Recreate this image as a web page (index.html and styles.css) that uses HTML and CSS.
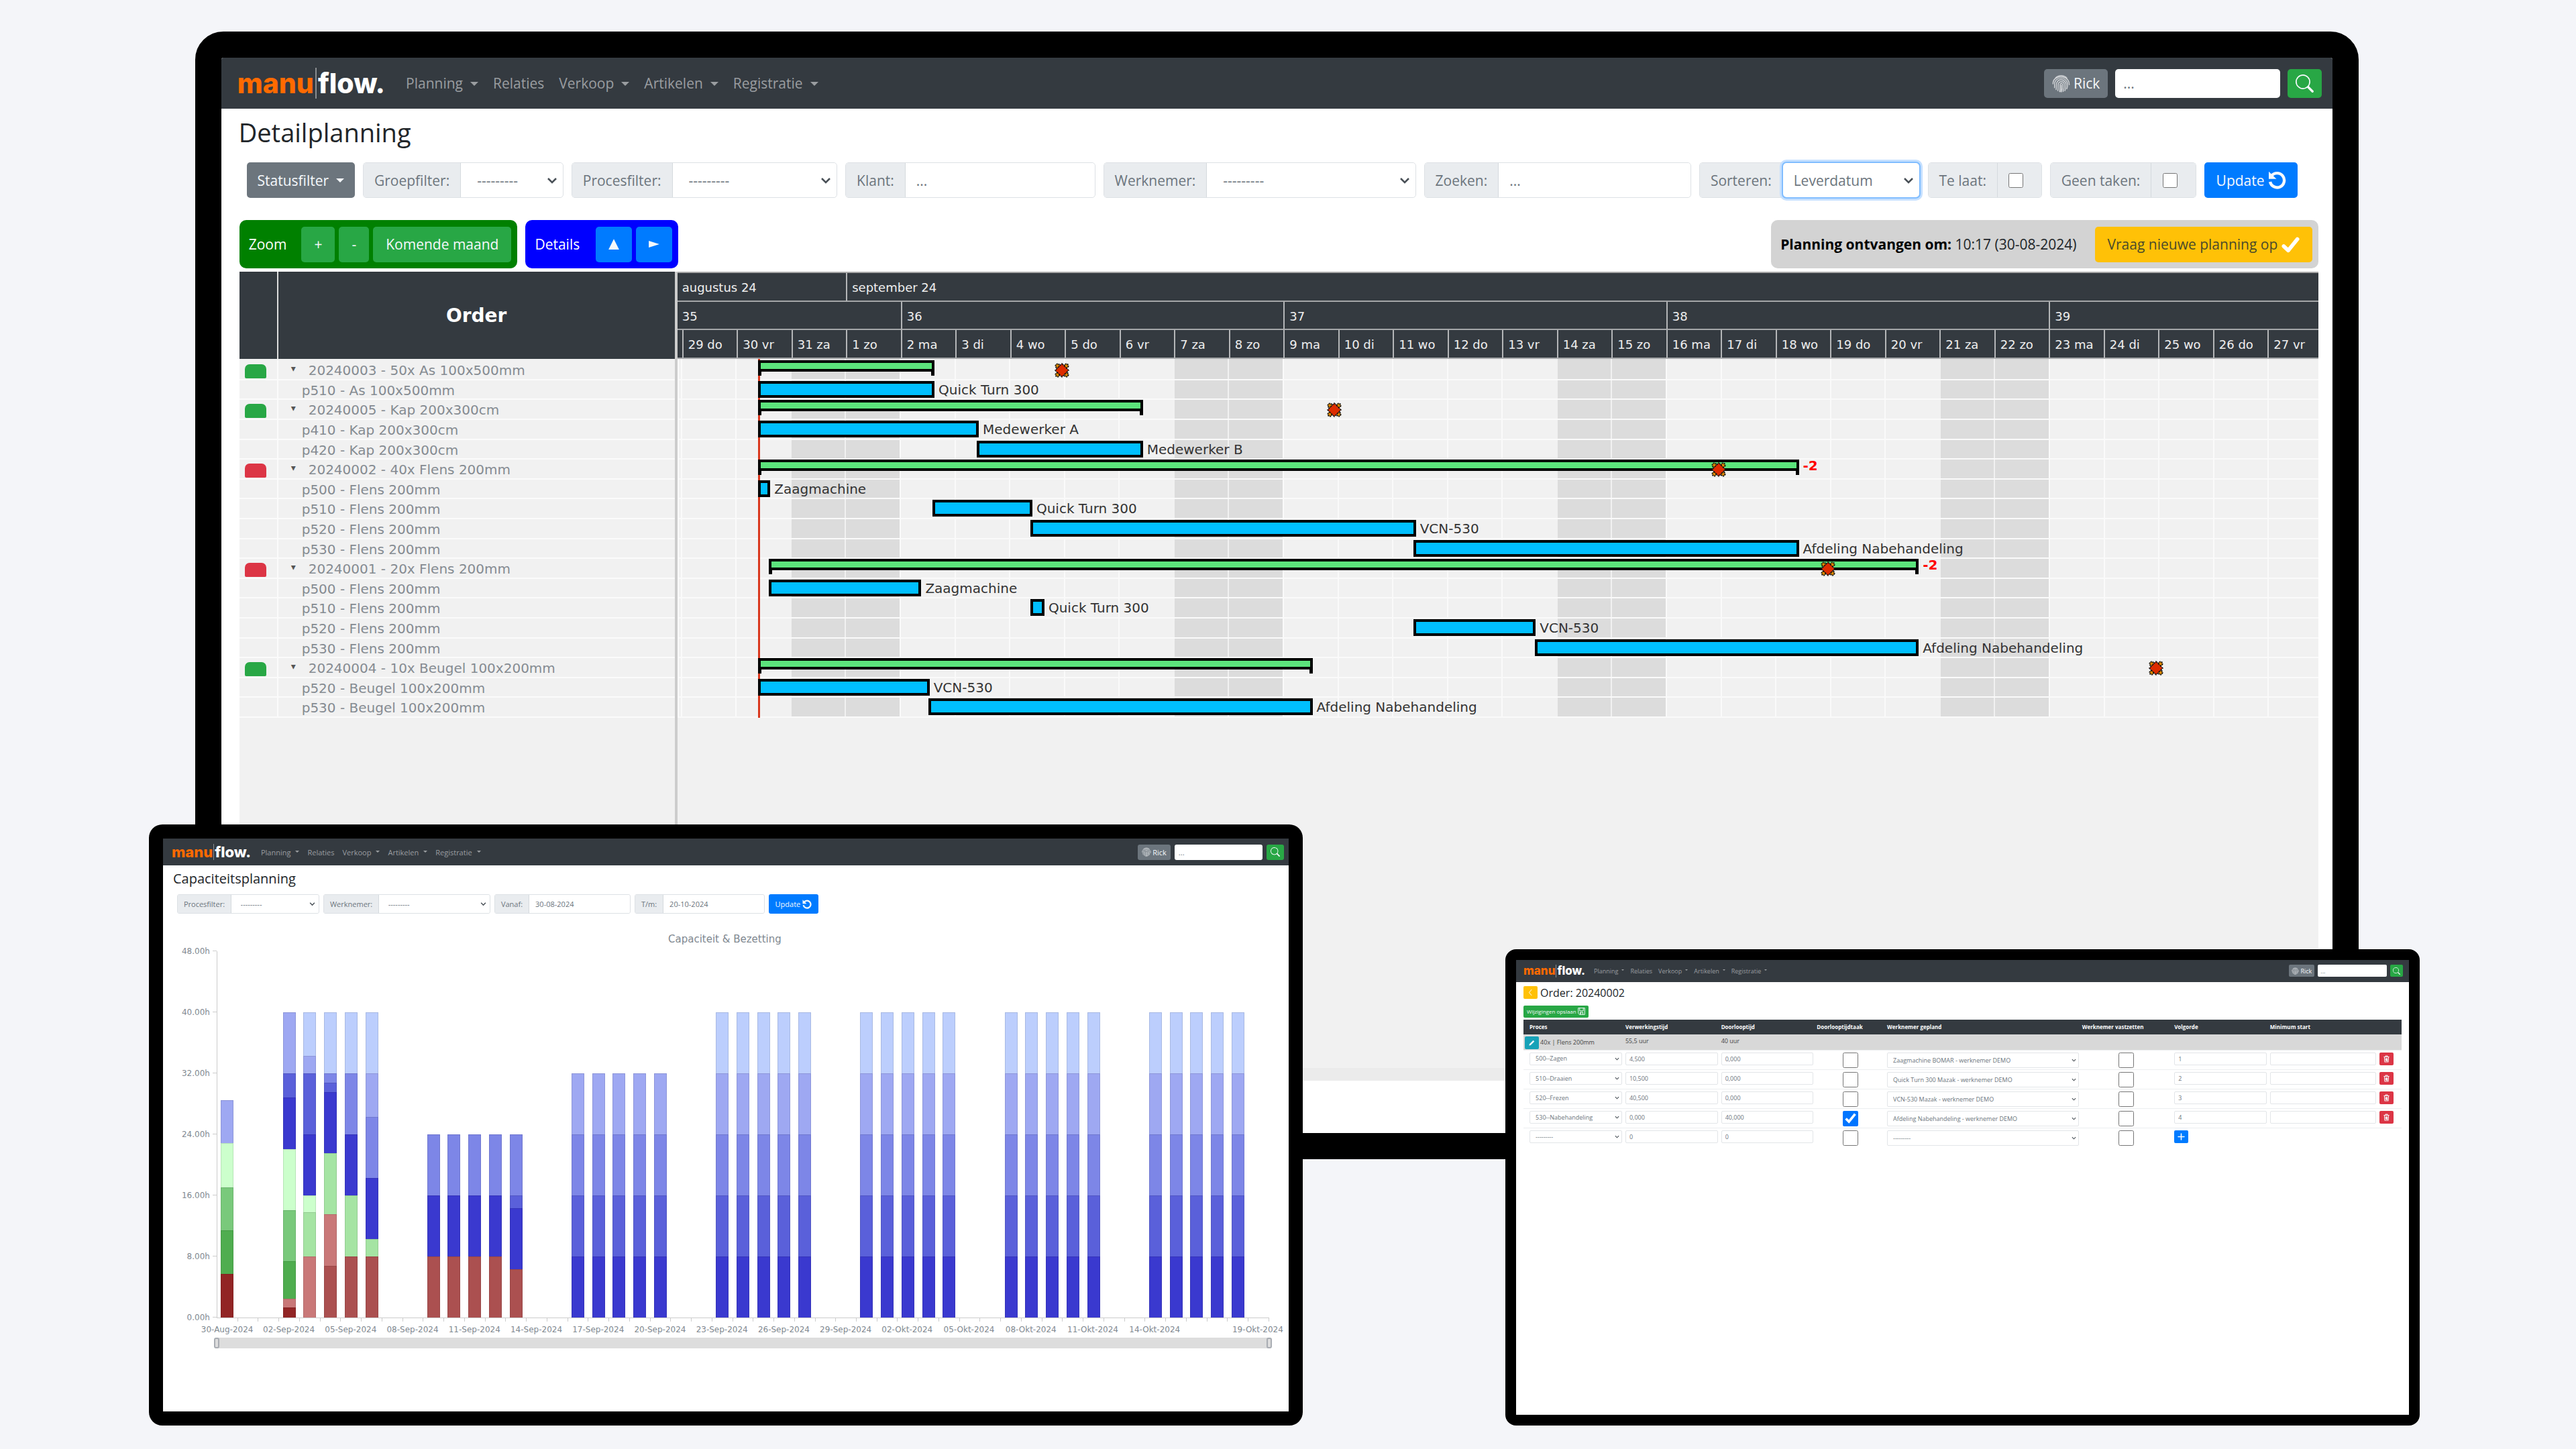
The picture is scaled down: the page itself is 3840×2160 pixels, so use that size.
FILE: index.html
```html
<!DOCTYPE html>
<html lang="nl">
<head>
<meta charset="utf-8">
<title>Manuflow</title>
<meta name="viewport" content="width=device-width, initial-scale=1">
<link rel="stylesheet" href="styles.css">
</head>
<body>
<svg class="sprite" aria-hidden="true">
  <symbol id="i-finger" viewBox="0 0 24 24"><g fill="none" stroke="currentColor" stroke-width="1.3" stroke-linecap="round"><path d="M4.5 4.6A10.6 10.6 0 0 1 19.500 4.600"/><path d="M1.200 12.500C1.200 9 3 5.500 6.500 4.200C11 2 18 3 21 7.500C22.500 9.500 22.800 11 22.800 13.500"/><path d="M3.200 17.500C3.600 15 3 13 3.600 10.600C5 6 9.500 5 12 5C16.500 5 20.500 8.500 20.600 13C20.700 15 20.300 17 19.600 19"/><path d="M5.300 20C6 17 5.400 14 6 11.500C7 8.500 9.500 7.200 12 7.200C15.500 7.200 18.300 10 18.400 13C18.500 16 18 19 17 21.500"/><path d="M7.600 21.500C8.300 18 7.800 15 8.300 12.500C8.800 10.500 10.300 9.500 12 9.500C14.300 9.500 16 11 16.100 13.200C16.200 16.500 15.600 20 14.700 22.500"/><path d="M10 22.800C10.700 19 10.300 16 10.600 13.500C10.800 12.300 11.300 11.800 12 11.800C13.200 11.800 13.800 12.500 13.800 13.500C14 17 13.500 20 12.500 23"/><path d="M12.100 14.200C12.300 17 12 20 11.400 22.800"/></g></symbol>
  <symbol id="i-search" viewBox="0 0 16 16"><path fill="currentColor" d="M11.742 10.344a6.5 6.5 0 1 0-1.397 1.398l.04.050 3.850 3.850a1 1 0 0 0 1.415-1.414l-3.850-3.850zM12 6.500a5.500 5.500 0 1 1-11 0 5.500 5.500 0 0 1 11 0z"/></symbol>
  <symbol id="i-reset" viewBox="0 0 16 16"><path d="M3 4.300A6.300 6.300 0 1 1 1.800 9.500" fill="none" stroke="currentColor" stroke-width="2.600"/><path d="M.6.400V7H7.400z" fill="currentColor"/></symbol>
  <symbol id="i-check" viewBox="0 0 16 16"><path d="M2 9.500L6 13.200L14 3.300" fill="none" stroke="currentColor" stroke-width="3.400" stroke-linecap="round" stroke-linejoin="round"/></symbol>
  <symbol id="i-back" viewBox="0 0 16 16"><path d="M10.500 1.500L5 8L10.500 14.500" fill="none" stroke="currentColor" stroke-width="1.400"/></symbol>
  <symbol id="i-save" viewBox="0 0 16 16"><path d="M1 1H15V15H3.500L1 12.500zM4 1V7H12V1M5 15V10H11V15M7 11V14" fill="none" stroke="currentColor" stroke-width="1.400"/></symbol>
  <symbol id="i-pen" viewBox="0 0 16 16"><path d="M2 14L3 10.500L11 2.500L13.500 5L5.500 13z" fill="currentColor"/></symbol>
  <symbol id="i-trash" viewBox="0 0 16 16"><path d="M2 3.500H14M6 3V1.500H10V3M3.500 4.500L4.300 14.500H11.700L12.500 4.500M6.200 6V13M8 6V13M9.800 6V13" fill="none" stroke="currentColor" stroke-width="1.500"/></symbol>
  <symbol id="i-plus" viewBox="0 0 16 16"><path d="M8 1.500V14.500M1.500 8H14.500" stroke="currentColor" stroke-width="2.400" stroke-linecap="round"/></symbol>
  <symbol id="i-milestone" viewBox="0 0 22 22"><g fill="#e08a00" stroke="#111" stroke-width="2" stroke-dasharray="2 1"><circle cx="4.500" cy="4.500" r="3"/><circle cx="17.500" cy="4.500" r="3"/><circle cx="4.500" cy="17.500" r="3"/><circle cx="17.500" cy="17.500" r="3"/></g><path d="M11 1L21 11L11 21L1 11z" fill="#dd2c00" stroke="#111" stroke-width="1.500" stroke-dasharray="3 1"/></symbol>
  <symbol id="i-up" viewBox="0 0 16 16"><path d="M8 1L15 15H1z" fill="currentColor"/></symbol>
  <symbol id="i-right" viewBox="0 0 16 16"><path d="M1 3.500L15 8L1 12.500z" fill="currentColor"/></symbol>
</svg>

<main class="stage">

<section class="device device-main">
  <nav class="nav">
    <a class="brand" href="#"><span class="brand-a">manu</span><span class="brand-b">flow.</span></a>
    <div class="links">
      <a class="drop" href="#">Planning</a><a href="#">Relaties</a><a class="drop" href="#">Verkoop</a><a class="drop" href="#">Artikelen</a><a class="drop" href="#">Registratie</a>
    </div>
    <form class="search">
      <button type="button" class="btn user"><svg class="icon"><use href="#i-finger"/></svg>Rick</button>
      <input type="text" aria-label="Zoeken" placeholder="...">
      <button type="button" class="btn green" aria-label="Zoek"><svg class="icon"><use href="#i-search"/></svg></button>
    </form>
  </nav>
  <h1>Detailplanning</h1>
  <form class="filters">
    <button type="button" class="btn grey drop f-status">Statusfilter</button>
    <div class="group f-groep"><label for="groep">Groepfilter:</label><select id="groep"><option>---------</option></select></div>
    <div class="group f-proces"><label for="proces">Procesfilter:</label><select id="proces"><option>---------</option></select></div>
    <div class="group f-klant"><label for="klant">Klant:</label><input id="klant" type="text" placeholder="..."></div>
    <div class="group f-werk"><label for="werk">Werknemer:</label><select id="werk"><option>---------</option></select></div>
    <div class="group f-zoek"><label for="zoek">Zoeken:</label><input id="zoek" type="text" placeholder="..."></div>
    <div class="group f-sort"><label for="sort">Sorteren:</label><select id="sort" class="focused"><option>Leverdatum</option></select></div>
    <div class="group f-laat"><label for="laat">Te laat:</label><span class="tick"><input id="laat" type="checkbox"></span></div>
    <div class="group f-geen"><label for="geen">Geen taken:</label><span class="tick"><input id="geen" type="checkbox"></span></div>
    <button type="button" class="btn blue f-update">Update<svg class="icon"><use href="#i-reset"/></svg></button>
  </form>
  <div class="tools">
    <div class="box box-zoom"><span>Zoom</span><div class="btns"><button class="btn green">+</button><button class="btn green">-</button><button class="btn green">Komende maand</button></div></div>
    <div class="box box-details"><span>Details</span><div class="btns"><button class="btn blue" aria-label="Inklappen"><svg class="icon"><use href="#i-up"/></svg></button><button class="btn blue" aria-label="Uitklappen"><svg class="icon"><use href="#i-right"/></svg></button></div></div>
    <div class="box box-status"><span><b>Planning ontvangen om:</b> 10:17 (30-08-2024)</span><button class="btn yellow">Vraag nieuwe planning op<svg class="icon"><use href="#i-check"/></svg></button></div>
  </div>
  <div class="gantt">
    <div class="tree">
      <div class="tree-head"><span></span><strong>Order</strong></div>
      <div class="tree-rows" id="tree"></div>
    </div>
    <div class="time">
      <div class="time-head" id="scale"></div>
      <div class="time-rows" id="bars"></div>
    </div>
  </div>
</section>

<section class="device device-capacity">
  <nav class="nav">
    <a class="brand" href="#"><span class="brand-a">manu</span><span class="brand-b">flow.</span></a>
    <div class="links">
      <a class="drop" href="#">Planning</a><a href="#">Relaties</a><a class="drop" href="#">Verkoop</a><a class="drop" href="#">Artikelen</a><a class="drop" href="#">Registratie</a>
    </div>
    <form class="search">
      <button type="button" class="btn user"><svg class="icon"><use href="#i-finger"/></svg>Rick</button>
      <input type="text" aria-label="Zoeken" placeholder="...">
      <button type="button" class="btn green" aria-label="Zoek"><svg class="icon"><use href="#i-search"/></svg></button>
    </form>
  </nav>
  <h1>Capaciteitsplanning</h1>
  <form class="filters">
    <div class="group c-proces"><label for="c-proces">Procesfilter:</label><select id="c-proces"><option>---------</option></select></div>
    <div class="group c-werk"><label for="c-werk">Werknemer:</label><select id="c-werk"><option>---------</option></select></div>
    <div class="group c-van"><label for="c-van">Vanaf:</label><input id="c-van" type="text" value="30-08-2024"></div>
    <div class="group c-tot"><label for="c-tot">T/m:</label><input id="c-tot" type="text" value="20-10-2024"></div>
    <button type="button" class="btn blue">Update<svg class="icon"><use href="#i-reset"/></svg></button>
  </form>
  <h2>Capaciteit &amp; Bezetting</h2>
  <div class="chart">
    <ol class="y-axis"><li>48.00h</li><li>40.00h</li><li>32.00h</li><li>24.00h</li><li>16.00h</li><li>8.00h</li><li>0.00h</li></ol>
    <div class="plot" id="plot"></div>
    <div class="range"><i></i><i></i></div>
  </div>
</section>

<section class="device device-order">
  <nav class="nav">
    <a class="brand" href="#"><span class="brand-a">manu</span><span class="brand-b">flow.</span></a>
    <div class="links">
      <a class="drop" href="#">Planning</a><a href="#">Relaties</a><a class="drop" href="#">Verkoop</a><a class="drop" href="#">Artikelen</a><a class="drop" href="#">Registratie</a>
    </div>
    <form class="search">
      <button type="button" class="btn user"><svg class="icon"><use href="#i-finger"/></svg>Rick</button>
      <input type="text" aria-label="Zoeken" placeholder="...">
      <button type="button" class="btn green" aria-label="Zoek"><svg class="icon"><use href="#i-search"/></svg></button>
    </form>
  </nav>
  <div class="order-title"><button class="btn yellow square back" aria-label="Terug"><svg class="icon"><use href="#i-back"/></svg></button><h1>Order: 20240002</h1></div>
  <button class="btn green save">Wijzigingen opslaan<svg class="icon"><use href="#i-save"/></svg></button>
  <table class="processes">
    <colgroup><col class="k1"><col class="k2"><col class="k2"><col class="k4"><col class="k5"><col class="k6"><col class="k2"><col class="k8"><col></colgroup>
    <thead><tr><th>Proces</th><th>Verwerkingstijd</th><th>Doorlooptijd</th><th>Doorlooptijdtaak</th><th>Werknemer gepland</th><th>Werknemer vastzetten</th><th>Volgorde</th><th>Minimum start</th><th></th></tr></thead>
    <tbody>
      <tr class="part"><td><button class="btn teal square" aria-label="Bewerken"><svg class="icon"><use href="#i-pen"/></svg></button>40x | Flens 200mm</td><td>55,5 uur</td><td>40 uur</td><td></td><td></td><td></td><td></td><td></td><td></td></tr>
      <tr><td><select aria-label="Proces"><option>500--Zagen</option></select></td><td><input type="text" aria-label="Verwerkingstijd" value="4,500"></td><td><input type="text" aria-label="Doorlooptijd" value="0,000"></td><td class="mid"><input type="checkbox" aria-label="Doorlooptijdtaak"></td><td><select class="tall" aria-label="Werknemer gepland"><option>Zaagmachine BOMAR - werknemer DEMO</option></select></td><td class="mid"><input type="checkbox" aria-label="Werknemer vastzetten"></td><td><input type="text" aria-label="Volgorde" value="1"></td><td><input class="tall" type="text" aria-label="Minimum start"></td><td><button class="btn red square" aria-label="Verwijderen"><svg class="icon"><use href="#i-trash"/></svg></button></td></tr>
      <tr><td><select aria-label="Proces"><option>510--Draaien</option></select></td><td><input type="text" aria-label="Verwerkingstijd" value="10,500"></td><td><input type="text" aria-label="Doorlooptijd" value="0,000"></td><td class="mid"><input type="checkbox" aria-label="Doorlooptijdtaak"></td><td><select class="tall" aria-label="Werknemer gepland"><option>Quick Turn 300 Mazak - werknemer DEMO</option></select></td><td class="mid"><input type="checkbox" aria-label="Werknemer vastzetten"></td><td><input type="text" aria-label="Volgorde" value="2"></td><td><input class="tall" type="text" aria-label="Minimum start"></td><td><button class="btn red square" aria-label="Verwijderen"><svg class="icon"><use href="#i-trash"/></svg></button></td></tr>
      <tr><td><select aria-label="Proces"><option>520--Frezen</option></select></td><td><input type="text" aria-label="Verwerkingstijd" value="40,500"></td><td><input type="text" aria-label="Doorlooptijd" value="0,000"></td><td class="mid"><input type="checkbox" aria-label="Doorlooptijdtaak"></td><td><select class="tall" aria-label="Werknemer gepland"><option>VCN-530 Mazak - werknemer DEMO</option></select></td><td class="mid"><input type="checkbox" aria-label="Werknemer vastzetten"></td><td><input type="text" aria-label="Volgorde" value="3"></td><td><input class="tall" type="text" aria-label="Minimum start"></td><td><button class="btn red square" aria-label="Verwijderen"><svg class="icon"><use href="#i-trash"/></svg></button></td></tr>
      <tr><td><select aria-label="Proces"><option>530--Nabehandeling</option></select></td><td><input type="text" aria-label="Verwerkingstijd" value="0,000"></td><td><input type="text" aria-label="Doorlooptijd" value="40,000"></td><td class="mid"><input type="checkbox" aria-label="Doorlooptijdtaak" checked></td><td><select class="tall" aria-label="Werknemer gepland"><option>Afdeling Nabehandeling - werknemer DEMO</option></select></td><td class="mid"><input type="checkbox" aria-label="Werknemer vastzetten"></td><td><input type="text" aria-label="Volgorde" value="4"></td><td><input class="tall" type="text" aria-label="Minimum start"></td><td><button class="btn red square" aria-label="Verwijderen"><svg class="icon"><use href="#i-trash"/></svg></button></td></tr>
      <tr><td><select aria-label="Proces"><option>---------</option></select></td><td><input type="text" aria-label="Verwerkingstijd" value="0"></td><td><input type="text" aria-label="Doorlooptijd" value="0"></td><td class="mid"><input type="checkbox" aria-label="Doorlooptijdtaak"></td><td><select class="tall" aria-label="Werknemer gepland"><option>---------</option></select></td><td class="mid"><input type="checkbox" aria-label="Werknemer vastzetten"></td><td><button class="btn blue square" aria-label="Toevoegen"><svg class="icon"><use href="#i-plus"/></svg></button></td><td></td><td></td></tr>
    </tbody>
  </table>
</section>

</main>
<script src="script.js"></script>
</body>
</html>
```
FILE: styles.css
```css
* { box-sizing: border-box; }

body {
  margin: 0;
  background: #f4f5f9;
  color: #212529;
  font-family: "Open Sans", "Noto Sans", sans-serif;
}

button, input, select { font: inherit; margin: 0; }
a { color: inherit; text-decoration: none; }
.sprite { position: absolute; width: 0; height: 0; }
.icon { width: 1em; height: 1em; flex: none; }

/* Three screens overlapping on a free canvas */
.stage { position: relative; height: 100vh; overflow: hidden; }

.device {
  position: absolute;
  display: flex;
  flex-direction: column;
  overflow: hidden;
  background: #fff;
  border: var(--bezel) solid #000;
  border-radius: var(--corner);
}

.device-main {
  left: 7.57%; top: 2.18%; width: 84%; height: 77.82%;
  --bezel: 39px; --corner: 42px;
  --nav-h: 76px; --nav-left: 24px; --nav-right: 16px;
  --brand: 41px; --brand-gap: 31px; --bar-h: 46px; --bar: 2px;
  --text: 21px; --link-gap: 22px; --caret: 6px; --caret-gap: 11px;
  --ctl: 43px; --ctl-pad: 12px; --ctl-gap: 11px; --search-w: 246px; --radius: 5px; --nav-icon: 27px;
  --field: 53px; --field-pad: 16px; --field-gap: 12px; --icon: 27px; --chev: 16px;
}
.device-capacity {
  left: 5.78%; top: 56.9%; width: 44.79%; height: 41.5%;
  --bezel: 21px; --corner: 20px;
  --nav-h: 40px; --nav-left: 13px; --nav-right: 7px;
  --brand: 22px; --brand-gap: 15px; --bar-h: 24px; --bar: 1px;
  --text: 11px; --link-gap: 12px; --caret: 3px; --caret-gap: 7px;
  --ctl: 23px; --ctl-pad: 6px; --ctl-gap: 6px; --search-w: 131px; --radius: 3px; --nav-icon: 14px;
  --field: 29px; --field-pad: 9px; --field-gap: 6px; --icon: 14px; --chev: 9px;
}
.device-order {
  left: 58.44%; top: 65.5%; width: 35.5%; height: 32.86%;
  --bezel: 16px; --corner: 16px;
  --nav-h: 33px; --nav-left: 11px; --nav-right: 9px;
  --brand: 17px; --brand-gap: 13px; --bar-h: 19px; --bar: 1px;
  --text: 9px; --link-gap: 9px; --caret: 2px; --caret-gap: 5px;
  --ctl: 18px; --ctl-pad: 4px; --ctl-gap: 5px; --search-w: 103px; --radius: 2px; --nav-icon: 11px;
  --field: 19px; --field-pad: 5px; --icon: 11px; --chev: 7px;
}

/* Top bar */
.nav {
  display: flex;
  align-items: center;
  flex: none;
  height: var(--nav-h);
  padding: 0 var(--nav-right) 0 var(--nav-left);
  background: #343a40;
  color: #9a9da0;
  font-size: var(--text);
}
.brand {
  display: flex;
  align-items: center;
  margin-right: var(--brand-gap);
  font: 800 var(--brand)/1 Inter, sans-serif;
}
.brand-a { color: #ff6a00; }
.brand-b { color: #fff; border-left: var(--bar) solid #8a8d90; margin-left: var(--bar); padding-left: var(--bar); line-height: var(--bar-h); }
.links { display: flex; gap: var(--link-gap); }
.drop::after {
  content: "";
  display: inline-block;
  margin-left: var(--caret-gap);
  vertical-align: 4px;
  border: var(--caret) solid transparent;
  border-top-color: currentColor;
  border-bottom: 0;
}
.search { display: flex; gap: var(--ctl-gap); margin-left: auto; }
.search input {
  width: var(--search-w);
  height: var(--ctl);
  padding: 0 var(--ctl-pad);
  border: 0;
  border-radius: var(--radius);
}
.search .btn { height: var(--ctl); padding: 0 var(--ctl-pad); }
.search .icon { width: var(--nav-icon); height: var(--nav-icon); }
.user { background: #6c757d; gap: 5px; }
.device-order .user, .device-capacity .user { gap: 2px; }
.user .icon { color: #d0d3d6; }

.btn {
  display: inline-flex;
  align-items: center;
  justify-content: center;
  border: 0;
  border-radius: var(--radius);
  color: #f5f8fb;
  white-space: nowrap;
}
.green { background: #28a745; }
.blue { background: #007bff; }
.grey { background: #6c757d; }
.yellow { background: #ffc107; color: #4a4a2a; }
.teal { background: #17a2b8; }
.red { background: #dc3545; }

h1 { margin: 0; font-weight: 500; }
::placeholder { color: #6c757d; opacity: 1; }

/* Filter bar */
.filters { display: flex; gap: var(--field-gap); font-size: var(--text); }
.filters .btn { height: var(--field); padding: 0 var(--field-pad); gap: 5px; }
.filters .btn .icon { width: var(--icon); height: var(--icon); }
.group {
  display: flex;
  height: var(--field);
  border: 1px solid #dde1e5;
  border-radius: var(--radius);
  background: #fff;
  color: #6c757d;
}
.group label {
  display: flex;
  align-items: center;
  padding: 0 var(--field-pad);
  background: #e9ecef;
  border-right: 1px solid #d5dade;
  white-space: nowrap;
}
.group input[type="text"], select, .processes input[type="text"] {
  flex: 1;
  min-width: 0;
  width: 100%;
  padding: 0 var(--field-pad);
  border: 0;
  background-color: #fff;
  color: #6c757d;
  border-radius: var(--radius);
}
select {
  appearance: none;
  background: #fff url("data:image/svg+xml,%3Csvg xmlns='http://www.w3.org/2000/svg' viewBox='0 0 16 16'%3E%3Cpath d='M2 5l6 6 6-6' fill='none' stroke='%23495057' stroke-width='2.600'/%3E%3C/svg%3E") no-repeat right calc(var(--field-pad) / 2) center / var(--chev);
}
.group select { padding-left: calc(var(--field-pad) * 3 / 2); }
.group .focused { position: relative; padding-left: var(--field-pad); outline: 2px solid #80bdff; box-shadow: 0 0 0 5px #c5e0ff; }
.tick { flex: 1; display: flex; align-items: center; justify-content: center; background: #e9ecef; }
.tick input { width: 22px; height: 22px; }
.device-main .tick { padding-right: 10px; }

/* Detail planning */
.device-main h1 { padding: 9px 26px 0; font-size: 38px; line-height: 52px; }
.device-main .filters { padding: 19px 52px 0 38px; }
.filters .f-status { flex: 162 1 0; padding: 0; gap: 0; }
.f-groep { flex: 298 1 0; }
.f-proces { flex: 396 1 0; }
.f-klant { flex: 372 1 0; }
.f-werk { flex: 466 1 0; }
.f-zoek { flex: 398 1 0; }
.f-sort { flex: 328 1 0; }
.f-laat { flex: 169 1 0; }
.f-geen { flex: 217 1 0; }
.filters .f-update { flex: 140 1 0; padding: 0; }

.tools { display: flex; gap: 12px; padding: 33px 21px 5px 27px; font-size: 21px; }
.box { display: flex; align-items: center; height: 72px; padding: 0 9px 0 14px; border-radius: 10px; white-space: nowrap; }
.box .btns { display: flex; gap: 6px; }
.box .btn { height: 53px; padding: 0 19px; gap: 6px; }
.box-zoom { background: #008000; color: #fff; gap: 22px; }
.box-details { background: #00f; color: #fff; gap: 24px; }
.box-details .btn { width: 54px; padding: 0; }
.box-details .icon { width: 18px; height: 18px; }
.box-status { margin-left: auto; background: #d3d3d3; color: #212529; gap: 27px; }
.box-status b { color: #000; }
.box-status .icon { width: 27px; height: 27px; color: #fff; }

/* Gantt */
.gantt { display: flex; flex: 1; margin: 0 21px 78px 27px; background: #f1f1f1; font-family: "DejaVu Sans", sans-serif; }
.tree { flex: none; width: 653px; border-right: 4px solid #ccc; }
.tree-head { display: grid; grid-template-columns: 56px 1fr; height: 130px; background: #343a40; color: #fff; font-size: 28px; }
.tree-head strong { display: flex; align-items: center; justify-content: center; border-left: 2px solid #ddd; }
.tree-rows, .time-rows { display: grid; grid-template-rows: repeat(18, minmax(0, 1fr)); height: 535px; padding-top: 2px; }
.tree-row { display: grid; grid-template-columns: 56px 1fr; grid-template-rows: minmax(0, 1fr); border-bottom: 2px solid #fbfbfb; color: #858b91; font-size: 20px; line-height: 30px; white-space: nowrap; }
.tree-row i { width: 32px; height: 21px; margin: 6px 8px 0; border-radius: 7px 7px 2px 2px; }
.tree-row .ok { background: #28a745; }
.tree-row .late { background: #dc3545; }
.tree-row span { grid-column: 2; padding-left: 35px; border-left: 2px solid #fbfbfb; }
.tree-row .order { display: flex; padding-left: 19px; }
.order::before { content: "▾"; width: 26px; font-size: 14px; line-height: 24px; color: #555; }

.time { position: relative; flex: 1; min-width: 0; overflow: hidden; border-bottom: 19px solid #ebebeb; }
.time-head { display: grid; grid-template-columns: 5fr repeat(29, 81.5fr) 76fr; grid-template-rows: repeat(3, 1fr); height: 130px; border-top: 2px solid #aaa; background: #343a40; color: #eee; font-size: 18px; }
.time-head span { display: flex; align-items: center; min-width: 0; padding: 2px 0 0 7px; border-left: 2px solid #b4b6b8; border-bottom: 2px solid #a4a6a8; white-space: nowrap; }
.time-head span.edge { border-left: 0; }
.time-rows { position: relative; }
.days { position: absolute; inset: 0; display: grid; grid-template-columns: 5fr repeat(29, 81.5fr) 76fr; }
.days i { border-left: 2px solid #fafafa; }
.days .weekend { background: #dcdcdc; border-left-color: #f1f1f1; }
.today { position: absolute; top: 0; bottom: 0; z-index: 1; width: 3px; background: #d9381e; }
.row { position: relative; border-bottom: 2px solid #fafafa; }
.row.shade { border-bottom-color: #fafafacc; }
.bar { position: absolute; top: 1px; z-index: 2; height: 25px; border: 4px solid #000; background: #00bfff; }
.bar.sum { top: 0; height: 17px; background: #5ce47c; }
.bar.sum::before, .bar.sum::after { content: ""; position: absolute; top: 9px; width: 5px; height: 10px; background: #000; }
.bar.sum::before { left: -4px; }
.bar.sum::after { right: -4px; }
.bar-label { position: absolute; top: 0; padding-left: 6px; color: #333; font-size: 20px; line-height: 28px; white-space: nowrap; }
.bar-label.over { color: #f00; font-weight: bold; line-height: 18px; }
.mile { position: absolute; top: 4px; z-index: 3; width: 22px; height: 22px; margin-left: -11px; }

/* Capacity chart */
.device-capacity h1 { padding: 5px 15px 0; font-size: 20px; line-height: 30px; }
.device-capacity .filters { padding: 8px 21px 0; }
.device-capacity .filters .btn { width: 74px; gap: 3px; }
.c-proces { width: 212px; }
.c-werk { width: 249px; }
.c-van { width: 203px; }
.c-tot { width: 194px; }
.device-capacity h2 { margin: 26px 0 0; padding-right: 3px; color: #808890; font: 15px/24px "DejaVu Sans", sans-serif; text-align: center; }
.chart { display: grid; grid-template-columns: 80px 1fr; padding: 0 29px 0 0; margin-top: -1px; color: #808890; font: 12px/14px "DejaVu Sans", sans-serif; }
.y-axis { display: flex; flex-direction: column; justify-content: space-between; height: 560px; margin: 0; padding: 0 10px 0 0; list-style: none; text-align: right; }
.y-axis li { position: relative; }
.y-axis li::after { content: ""; position: absolute; right: -10px; top: 6px; width: 6px; height: 1px; background: #ccc; }
.plot { display: grid; grid-template-columns: repeat(51, 1fr); height: 547px; margin: 7px 0 35px; border-left: 1px solid #ccc; border-bottom: 1px solid #ccc; }
.day { position: relative; display: flex; flex-direction: column-reverse; align-items: center; border-right: 1px solid transparent; }
.day::after { content: ""; position: absolute; right: -1px; top: 100%; width: 1px; height: 6px; background: #ccc; }
.day i { flex: none; width: 19px; border: 1px solid #0000001a; border-bottom: 0; }
.day span { position: absolute; top: 100%; left: 50%; margin: 11px 0 0 -39px; width: 78px; white-space: nowrap; }
.range { grid-column: 2; display: flex; justify-content: space-between; height: 16px; margin-top: -6px; background: #ddd; }
.range i { width: 8px; margin: 0 -4px; border: 2px solid #a9adb3; border-radius: 3px; background: #ddd; }

/* Order form */
.order-title { display: flex; align-items: center; gap: 4px; padding: 5px 11px 0; }
.order-title h1 { font-size: 16px; line-height: 22px; }
.square { width: 21px; height: 19px; padding: 0; }
.back { color: #fff; }
.device-order .icon { width: var(--icon); height: var(--icon); }
.save { align-self: flex-start; height: 18px; margin: 8px 11px 3px; padding: 0 5px; gap: 2px; font-size: 8px; }
.processes { margin: 0 11px; border-collapse: collapse; table-layout: fixed; font-size: 8px; color: #6c757d; }
.processes .k1 { width: 11.6%; }
.processes .k2 { width: 10.9%; }
.processes .k4 { width: 8%; }
.processes .k5 { width: 22.2%; }
.processes .k6 { width: 10.5%; }
.processes .k8 { width: 12.5%; }
.processes th { height: 22px; padding: 0; background: #343a40; color: #fff; text-align: left; white-space: nowrap; }
.processes td { height: 29px; padding: 3px 5px 0 0; vertical-align: top; border-bottom: 1px solid #eceef0; }
.processes tr:last-child td { border-bottom: 0; }
.processes th:first-child, .processes td:first-child { padding-left: 9px; }
.processes .part td { height: 24px; padding-top: 2px; background: #d8d8d8; color: #444; font-size: 9px; line-height: 16px; white-space: nowrap; }
.processes .part td:first-child { display: flex; align-items: center; gap: 2px; padding-left: 2px; }
.processes td > * { display: block; }
.processes td > .btn { display: flex; }
.processes select, .processes input[type="text"] { height: 19px; border: 1px solid #e2e5e8; font-size: 9px; line-height: 12px; }
.processes select { padding-left: 8px; }
.processes .tall { height: 23px; }
.processes .mid input { width: 23px; height: 23px; margin: 0 auto; }
.processes td:last-child { padding-right: 0; }
```
FILE: script.js
```js
// Gantt: times are in days since 29 August 2024, 00:00.
const SPAN = 30, LEAD = 0.06;
const pct = d => ((d + LEAD) / SPAN * 100) + '%';

const rows = [
  { order: '20240003 - 50x As 100x500mm', state: 'ok', from: 1.42, to: 4.64, due: 6.97 },
  { task: 'p510 - As 100x500mm', from: 1.42, to: 4.64, by: 'Quick Turn 300' },
  { order: '20240005 - Kap 200x300cm', state: 'ok', from: 1.42, to: 8.45, due: 11.95 },
  { task: 'p410 - Kap 200x300cm', from: 1.42, to: 5.45, by: 'Medewerker A' },
  { task: 'p420 - Kap 200x300cm', from: 5.41, to: 8.45, by: 'Medewerker B' },
  { order: '20240002 - 40x Flens 200mm', state: 'late', from: 1.42, to: 20.44, due: 18.97, over: '-2' },
  { task: 'p500 - Flens 200mm', from: 1.42, to: 1.64, by: 'Zaagmachine' },
  { task: 'p510 - Flens 200mm', from: 4.6, to: 6.43, by: 'Quick Turn 300' },
  { task: 'p520 - Flens 200mm', from: 6.39, to: 13.44, by: 'VCN-530' },
  { task: 'p530 - Flens 200mm', from: 13.39, to: 20.44, by: 'Afdeling Nabehandeling' },
  { order: '20240001 - 20x Flens 200mm', state: 'late', from: 1.61, to: 22.63, due: 20.97, over: '-2' },
  { task: 'p500 - Flens 200mm', from: 1.61, to: 4.4, by: 'Zaagmachine' },
  { task: 'p510 - Flens 200mm', from: 6.39, to: 6.65, by: 'Quick Turn 300' },
  { task: 'p520 - Flens 200mm', from: 13.39, to: 15.63, by: 'VCN-530' },
  { task: 'p530 - Flens 200mm', from: 15.61, to: 22.63, by: 'Afdeling Nabehandeling' },
  { order: '20240004 - 10x Beugel 100x200mm', state: 'ok', from: 1.42, to: 11.55, due: 26.97 },
  { task: 'p520 - Beugel 100x200mm', from: 1.42, to: 4.55, by: 'VCN-530' },
  { task: 'p530 - Beugel 100x200mm', from: 4.53, to: 11.55, by: 'Afdeling Nabehandeling' }
];

document.getElementById('tree').innerHTML = rows.map(r => r.order
  ? `<div class="tree-row"><i class="${r.state}"></i><span class="order">${r.order}</span></div>`
  : `<div class="tree-row"><span>${r.task}</span></div>`).join('');

const names = ['do', 'vr', 'za', 'zo', 'ma', 'di', 'wo'];
const cell = (row, from, to, text, edge) =>
  `<span${edge ? ' class="edge"' : ''} style="grid-area:${row}/${from}/${row + 1}/${to}">${text}</span>`;
let head = cell(1, 1, 5, 'augustus 24', true) + cell(1, 5, 32, 'september 24')
  + cell(2, 1, 6, '35', true) + cell(2, 6, 13, '36') + cell(2, 13, 20, '37')
  + cell(2, 20, 27, '38') + cell(2, 27, 32, '39') + cell(3, 1, 2, '', true);
let days = '<i></i>';
for (let d = 0; d < 30; d++) {
  const date = d < 3 ? 29 + d : d - 2;
  const name = names[d % 7];
  head += cell(3, d + 2, d + 3, date + ' ' + name);
  days += `<i${name[0] === 'z' ? ' class="weekend"' : ''}></i>`;
}
document.getElementById('scale').innerHTML = head;

document.getElementById('bars').innerHTML =
  `<div class="days">${days}</div><div class="today" style="left:${pct(1.42)}"></div>` +
  rows.map(r => {
    const label = r.by || r.over;
    return '<div class="row">' +
      `<div class="bar${r.order ? ' sum' : ''}" style="left:${pct(r.from)};width:${(r.to - r.from) / SPAN * 100}%"></div>` +
      (label ? `<span class="bar-label${r.over ? ' over' : ''}" style="left:${pct(r.to)}">${label}</span>` : '') +
      (r.due ? `<svg class="mile" style="left:${pct(r.due)}"><use href="#i-milestone"/></svg>` : '') +
      '</div>';
  }).join('');

// Capacity chart: each day is a stack of [upper bound in hours, colour].
const B = ['#3a39cf', '#5a60da', '#7d86e7', '#9ea8f2', '#bccefd'];
const G = ['#4fad4f', '#79c97b', '#a5e4a3', '#ccffcc'];
const R = ['#922525', '#ab5050', '#c97878'];
const low = [[8, R[1]], [16, B[0]], [24, B[2]]];
const mid = [[8, B[0]], [16, B[1]], [24, B[2]], [32, B[3]]];
const full = [...mid, [40, B[4]]];
const load = {
  0: [[5.7, R[0]], [11.4, G[0]], [17.1, G[1]], [22.9, G[3]], [28.5, B[3]]],
  3: [[1.3, R[0]], [2.5, R[2]], [7.4, G[0]], [14.1, G[1]], [22.1, G[3]], [28.8, B[0]], [32, B[1]], [40, B[3]]],
  4: [[8, R[2]], [13.8, G[2]], [16, G[3]], [24, B[0]], [32, B[1]], [34.3, B[3]], [40, B[4]]],
  5: [[6.75, R[1]], [13.5, R[2]], [21.5, G[2]], [29.5, B[0]], [30.8, B[1]], [32, B[2]], [40, B[4]]],
  6: [[8, R[1]], [16, G[2]], [24, B[0]], [32, B[2]], [40, B[4]]],
  7: [[8, R[1]], [10.3, G[2]], [18.3, B[0]], [26.3, B[2]], [32, B[3]], [40, B[4]]],
  10: low, 11: low, 12: low, 13: low,
  14: [[6.3, R[1]], [14.3, B[0]], [16, B[1]], [24, B[2]]]
};
for (let d = 17; d < 22; d++) load[d] = mid;
for (const week of [24, 31, 38, 45]) for (let d = week; d < week + 5; d++) load[d] = full;

const two = n => String(n).padStart(2, '0');
const dateText = d => d < 2 ? (30 + d) + '-Aug-2024' : d < 32 ? two(d - 1) + '-Sep-2024' : two(d - 31) + '-Okt-2024';
let plot = '';
for (let d = 0; d < 51; d++) {
  let base = 0, parts = '';
  for (const [top, colour] of load[d] || []) {
    parts += `<i style="height:${(top - base) / 48 * 100}%;background:${colour}"></i>`;
    base = top;
  }
  const shown = (d % 3 === 0 && d < 46) || d === 50;
  plot += `<div class="day">${parts}${shown ? `<span>${dateText(d)}</span>` : ''}</div>`;
}
document.getElementById('plot').innerHTML = plot;
```
